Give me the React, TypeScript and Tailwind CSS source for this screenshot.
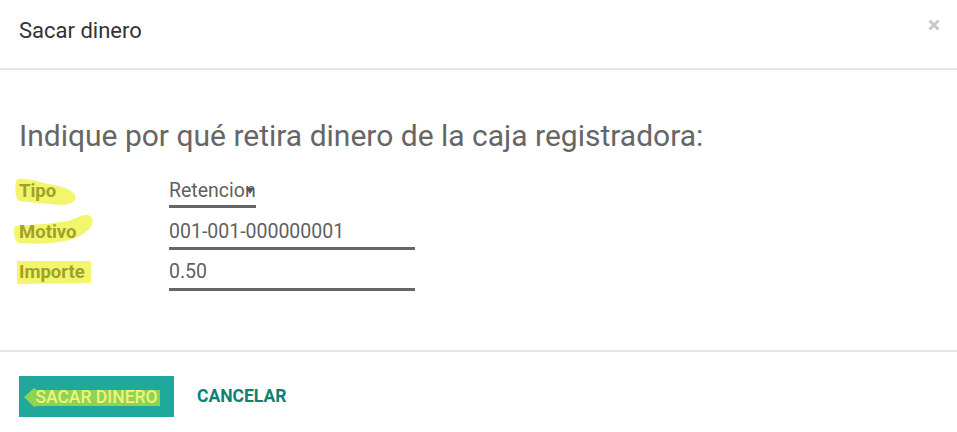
const font = { fontFamily: "Roboto, 'Liberation Sans', sans-serif" };

// hand-drawn marker strokes behind the labels
const Marker = ({ d }: { d: string }) => (
  <svg className="absolute left-[-5px] top-[-12px]" width="90" height="48" viewBox="0 0 90 48">
    <path d={d} fill="#f3f56c" />
  </svg>
);

const Field = ({
  label,
  marker,
  value,
  width,
  pb,
  mb,
  caret,
}: {
  label: string;
  marker: string;
  value: string;
  width: string;
  pb: string;
  mb: string;
  caret?: boolean;
}) => (
  <div className="flex items-end">
    <div className={`relative w-[150px] ${mb}`}>
      <Marker d={marker} />
      <span className="relative block leading-[24px] text-[18.5px] font-bold text-[#9fa22a]">{label}</span>
    </div>
    <div className={`relative ${width} ${pb} border-b-[3px] border-[#666]`}>
      <span className="block leading-[24px] text-[19.5px] text-[#5f5f5f] whitespace-nowrap">{value}</span>
      {caret && (
        <svg className="absolute right-[2px] top-[9px]" width="8" height="6" viewBox="0 0 8 6">
          <path d="M0 0 L8 0 L4 6 Z" fill="#555" />
        </svg>
      )}
    </div>
  </div>
);

const App = () => {
  return (
    <div className="w-[957px] h-[432px] bg-white flex flex-col" style={font}>
      <div className="h-[70px] shrink-0 flex justify-between pl-[19px] pr-[17px] border-b-2 border-[#e6e6e6]">
        <h3 className="mt-[18px] text-[22px] leading-[26px] text-[#333]">Sacar dinero</h3>
        <svg className="mt-[19px]" width="12" height="12" viewBox="0 0 12 12">
          <path d="M1.5 1.5 L10.5 10.5 M10.5 1.5 L1.5 10.5" stroke="#c9c9c9" strokeWidth="3" />
        </svg>
      </div>
      <div className="flex-1 px-[19px] pt-[48px] border-b-2 border-[#e6e6e6]">
        <p className="text-[30px] leading-[36px] text-[#666] whitespace-nowrap">
          Indique por qué retira dinero de la caja registradora:
        </p>
        <div className="mt-[25px] flex flex-col">
          <Field
            label="Tipo"
            marker="M3 12 C12 11 22 14 34 17 C46 19 56 21 61 28 C64 34 56 38 46 38 C32 37 16 35 5 34 C1 30 0 20 3 12 Z"
            value="Retencion"
            width="w-[87px]"
            pb="pb-[2px]"
            mb="mb-[5px]"
            caret
          />
          <div className="mt-[12px]">
            <Field
              label="Motivo"
              marker="M1 18 C14 17 36 16 54 13 C62 11 68 6 74 7 C80 9 80 15 76 20 C70 27 60 32 46 34 C32 36 16 36 4 35 C0 31 -1 24 1 18 Z"
              value="001-001-000000001"
              width="w-[246px]"
              pb="pb-[3px]"
              mb="mb-[6px]"
            />
          </div>
          <div className="mt-[10px]">
            <Field
              label="Importe"
              marker="M3 13 L77 13 L77 35 L3 36 Z"
              value="0.50"
              width="w-[246px]"
              pb="pb-[4px]"
              mb="mb-[7px]"
            />
          </div>
        </div>
      </div>
      <div className="h-[80px] shrink-0 flex items-start gap-[23px] pl-[19px] pt-[24px]">
        <button className="relative w-[155px] h-[41px] bg-[#20a89c] flex items-center justify-center">
          <svg className="absolute left-[5px] top-[9px]" width="138" height="24" viewBox="0 0 138 24">
            <path d="M0 12 L10 3 L13 5 L136 5 L136 21 L13 21 L10 22 Z" fill="#8ed256" />
          </svg>
          <span className="relative text-[17.5px] leading-[20px] font-medium text-[#eef479] whitespace-nowrap">SACAR DINERO</span>
        </button>
        <button className="h-[41px] text-[17.5px] font-bold text-[#0e8076] whitespace-nowrap">CANCELAR</button>
      </div>
    </div>
  );
};

export default App;
